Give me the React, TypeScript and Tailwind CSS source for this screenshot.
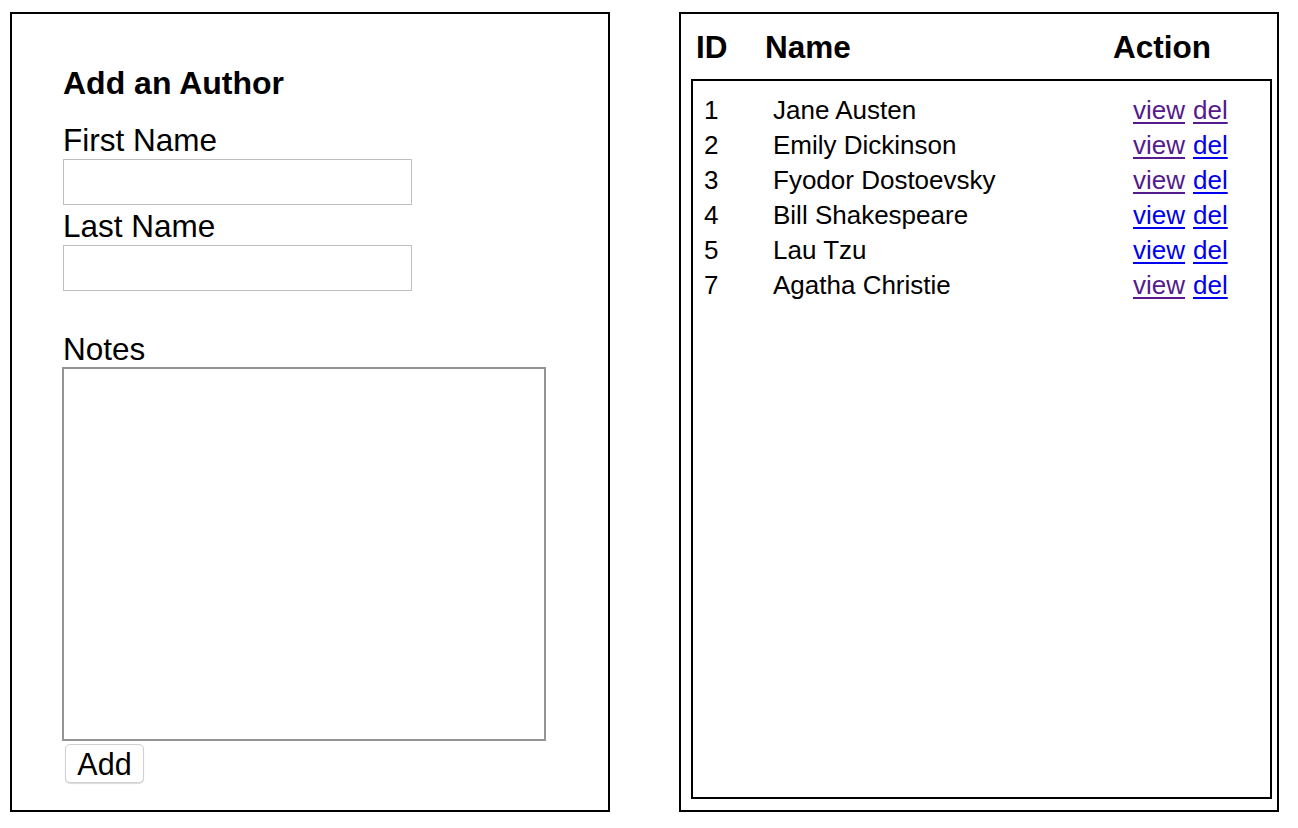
import React from "react";

const rows = [
  { id: 1, name: "Jane Austen", viewV: true, delV: true },
  { id: 2, name: "Emily Dickinson", viewV: true, delV: false },
  { id: 3, name: "Fyodor Dostoevsky", viewV: true, delV: false },
  { id: 4, name: "Bill Shakespeare", viewV: false, delV: false },
  { id: 5, name: "Lau Tzu", viewV: false, delV: false },
  { id: 7, name: "Agatha Christie", viewV: true, delV: false },
];

export default function App() {
  return (
    <div
      className="flex items-start gap-[69px] pl-[10px] pt-[12px] bg-white text-black w-[1298px] h-[828px]"
      style={{ fontFamily: '"Liberation Sans", Arial, Helvetica, sans-serif' }}
    >
      {/* Left panel */}
      <div className="flex flex-col w-[600px] h-[800px] border-2 border-black pl-[51px]">
        <h2 className="mt-[51px] text-[32px] leading-[36px] font-bold">Add an Author</h2>
        <label className="mt-[21px] text-[31.5px] leading-[36px]">First Name</label>
        <input className="mt-[1px] w-[349px] h-[46px] border border-[#bfbfbf] bg-white outline-none" />
        <label className="mt-[3px] text-[31.5px] leading-[36px]">Last Name</label>
        <input className="mt-[1px] w-[349px] h-[46px] border border-[#bfbfbf] bg-white outline-none" />
        <label className="mt-[40px] text-[31.5px] leading-[36px]">Notes</label>
        <textarea className="ml-[-1px] w-[484px] h-[374px] border-2 border-[#949494] bg-white outline-none resize-none" />
        <button className="mt-[3px] ml-[2px] w-[79px] h-[39px] rounded-[5px] border border-[#d0d0d0] bg-white shadow-[0_1px_1px_rgba(0,0,0,0.15)] text-[30.5px] leading-[36px] text-black flex items-center justify-center">
          Add
        </button>
      </div>

      {/* Right panel */}
      <div className="flex flex-col w-[600px] h-[800px] border-2 border-black">
        <div className="flex mt-[15px] pl-[15px] text-[31.5px] leading-[36px] font-bold">
          <div className="w-[69px]">ID</div>
          <div className="w-[348px]">Name</div>
          <div>Action</div>
        </div>
        <div className="mt-[14px] ml-[10px] w-[581px] h-[720px] border-2 border-black pt-[12px] pl-[11px]">
          {rows.map((r) => (
            <div key={r.id} className="flex text-[26px] leading-[35px]">
              <div className="w-[69px]">{r.id}</div>
              <div className="w-[360px]">{r.name}</div>
              <div className="flex gap-[8px]">
                <a
                  href="#"
                  className={`underline decoration-[2px] underline-offset-[3px] ${
                    r.viewV ? "text-[#551a8b]" : "text-[#0000ee]"
                  }`}
                >
                  view
                </a>
                <a
                  href="#"
                  className={`underline decoration-[2px] underline-offset-[3px] ${
                    r.delV ? "text-[#551a8b]" : "text-[#0000ee]"
                  }`}
                >
                  del
                </a>
              </div>
            </div>
          ))}
        </div>
      </div>
    </div>
  );
}
